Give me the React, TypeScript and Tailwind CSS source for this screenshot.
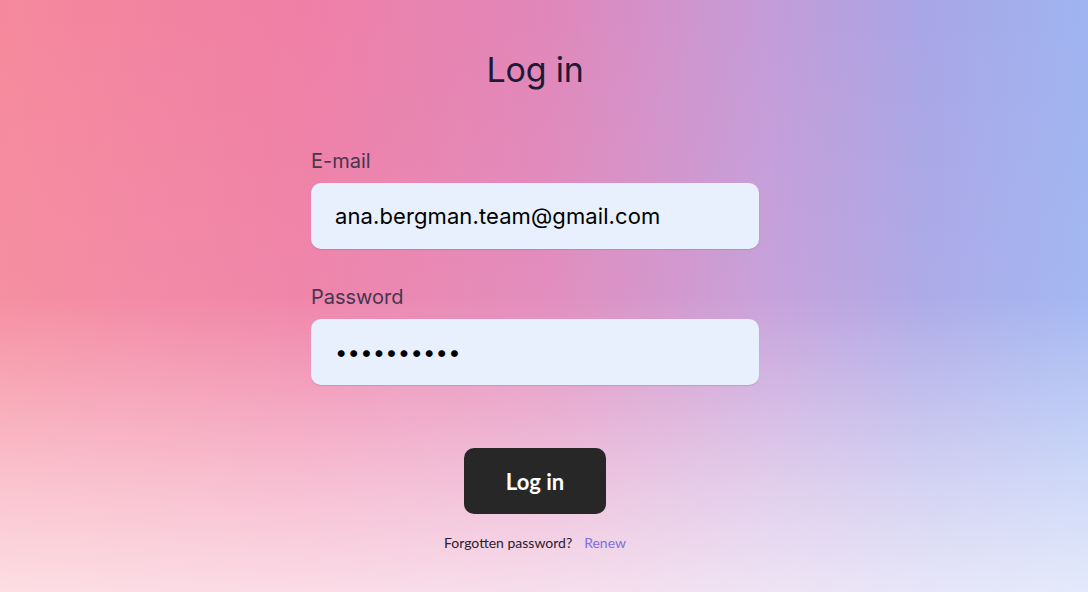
import React from 'react'

export default function App() {
  return (
    <div className="relative min-h-[592px] w-full overflow-hidden bg-[linear-gradient(90deg,#f5899c_0%,#ef7fa6_28%,#e187ba_50%,#c59cd8_70%,#a9a6e6_85%,#9fb4f1_100%)] font-['Inter',sans-serif]">
      {/* soft fade toward the bottom */}
      <div className="pointer-events-none absolute inset-0 bg-[linear-gradient(180deg,rgba(255,255,255,0)_0%,rgba(255,255,255,0.05)_50%,rgba(255,255,255,0.5)_82%,rgba(255,255,255,0.72)_100%)]" />

      <div className="relative flex flex-col items-center pt-[49px] pr-[18px]">
        <h1 className="text-[34px] leading-[42px] text-[#1d1a35] tracking-[-0.2px]">Log in</h1>

        <form className="mt-[58px] flex w-[448px] flex-col" onSubmit={(e) => e.preventDefault()}>
          <label className="text-[20px] leading-[24px] text-[#47364d]">E-mail</label>
          <div className="mt-[10px] flex h-[66px] items-center rounded-[10px] bg-[#e8f0fe] px-[24px] shadow-[0_1px_1px_rgba(120,90,140,0.25)]">
            <span className="text-[22px] text-black tracking-[0.1px]">ana.bergman.team@gmail.com</span>
          </div>

          <label className="mt-[36px] text-[20px] leading-[24px] text-[#47364d]">Password</label>
          <div className="mt-[10px] flex h-[66px] items-center rounded-[10px] bg-[#e8f0fe] px-[24px] shadow-[0_1px_1px_rgba(120,90,140,0.25)]">
            <span className="text-[22px] leading-none tracking-[0.2px] text-black">••••••••••</span>
          </div>

          <div className="mt-[63px] flex justify-center">
            <button
              type="submit"
              className="h-[66px] w-[142px] rounded-[10px] bg-[#272727] font-['Lato',sans-serif] text-[22px] font-bold text-white"
            >
              Log in
            </button>
          </div>
        </form>

        <p className="mt-[18px] font-['Lato',sans-serif] text-[14px] text-[#2a2030]">
          Forgotten password?
          <a href="#" className="ml-[12px] text-[#7c6fe0]">Renew</a>
        </p>
      </div>
    </div>
  )
}
